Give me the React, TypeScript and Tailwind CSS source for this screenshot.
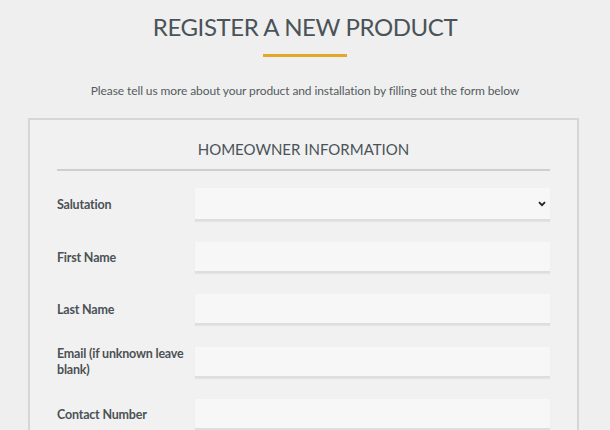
import React from "react";

const fields = [
  { label: "Salutation", select: true },
  { label: "First Name" },
  { label: "Last Name" },
  { label: "Email (if unknown leave blank)" },
  { label: "Contact Number" },
];

export default function App() {
  return (
    <div className="min-h-screen bg-[#efefef] text-[#4b5257] font-['Lato','Open_Sans',sans-serif] overflow-hidden">
      <h1 className="pt-[10px] text-center text-[24px] leading-[34px] tracking-[-0.4px] text-[#4a5358]">
        REGISTER A NEW PRODUCT
      </h1>
      <div className="mx-auto mt-[10px] h-[3px] w-[84px] bg-[#e1a82b]" />
      <p className="mt-[25px] text-center text-[12px] leading-[18px] tracking-[-0.1px] text-[#555b60]">
        Please tell us more about your product and installation by filling out the form below
      </p>

      <div className="ml-[28px] mt-[18px] w-[551px] border-2 border-b-0 border-[#d6d6d6] bg-[#f1f1f1] px-[27px] pt-[19px]">
        <h2 className="text-center text-[15px] leading-[20px] text-[#4a5358]">
          HOMEOWNER INFORMATION
        </h2>
        <div className="mt-[10px] h-[2px] bg-[#cfcfcf]" />

        <div className="mt-[17px] flex flex-col gap-[21px]">
          {fields.map((f) => (
            <div key={f.label} className="flex items-center">
              <label className="w-[138px] text-[12.5px] font-bold leading-[16px] tracking-[-0.2px] text-[#4b5156]">
                {f.label}
              </label>
              <div
                className={
                  (f.select ? "h-[33px] " : "h-[31px] ") +
                  "relative flex-1 bg-[#f7f7f7] border-b-2 border-[#dedede] shadow-[0_1px_1px_rgba(0,0,0,0.05)]"
                }
              >
                {f.select && (
                  <svg
                    className="absolute right-[4px] top-[13px]"
                    width="8"
                    height="6"
                    viewBox="0 0 8 6"
                  >
                    <path d="M1 1.2 L4 4.2 L7 1.2" fill="none" stroke="#222" strokeWidth="1.8" />
                  </svg>
                )}
              </div>
            </div>
          ))}
        </div>
      </div>
    </div>
  );
}
